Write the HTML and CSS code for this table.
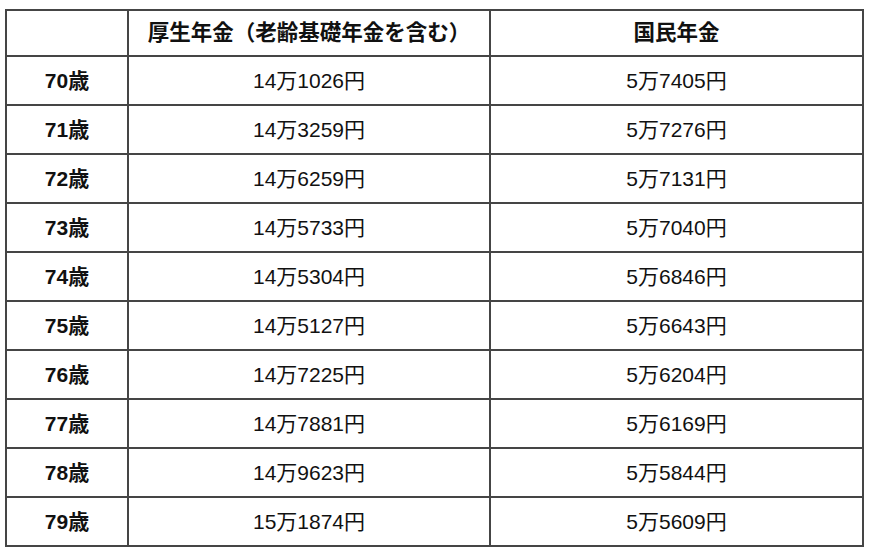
FILE: index.html
```html
<!DOCTYPE html>
<html lang="ja">
<head>
<meta charset="utf-8">
<link rel="stylesheet" href="styles.css">
</head>
<body>
<table class="pension">
  <colgroup>
    <col class="c-age">
    <col class="c-kosei">
    <col class="c-kokumin">
  </colgroup>
  <thead>
    <tr class="head-row">
      <th></th>
      <th>厚生年金（老齢基礎年金を含む）</th>
      <th>国民年金</th>
    </tr>
  </thead>
  <tbody>
    <tr><th>70歳</th><td>14万1026円</td><td>5万7405円</td></tr>
    <tr><th>71歳</th><td>14万3259円</td><td>5万7276円</td></tr>
    <tr><th>72歳</th><td>14万6259円</td><td>5万7131円</td></tr>
    <tr><th>73歳</th><td>14万5733円</td><td>5万7040円</td></tr>
    <tr><th>74歳</th><td>14万5304円</td><td>5万6846円</td></tr>
    <tr><th>75歳</th><td>14万5127円</td><td>5万6643円</td></tr>
    <tr><th>76歳</th><td>14万7225円</td><td>5万6204円</td></tr>
    <tr><th>77歳</th><td>14万7881円</td><td>5万6169円</td></tr>
    <tr><th>78歳</th><td>14万9623円</td><td>5万5844円</td></tr>
    <tr><th>79歳</th><td>15万1874円</td><td>5万5609円</td></tr>
  </tbody>
</table>
</body>
</html>
```

FILE: styles.css
```css
html, body {
  margin: 0;
  padding: 0;
  background: #ffffff;
}

body {
  font-family: "Liberation Sans", "Noto Sans CJK JP", sans-serif;
  color: #111111;
}

.pension {
  margin: 9px 0 0 5px;
  border-collapse: collapse;
  table-layout: fixed;
  width: 857px;
}

.c-age { width: 122px; }
.c-kosei { width: 362px; }
.c-kokumin { width: 373px; }

.pension th,
.pension td {
  border: 2px solid #454545;
  padding: 0;
  text-align: center;
  vertical-align: middle;
  font-size: 21px;
  line-height: 24px;
}

.pension th {
  font-weight: bold;
}

.pension thead th {
  font-size: 21.5px;
}

.pension td {
  font-weight: normal;
}

.pension tbody tr {
  height: 49px;
}

.pension .head-row {
  height: 46px;
}
```
